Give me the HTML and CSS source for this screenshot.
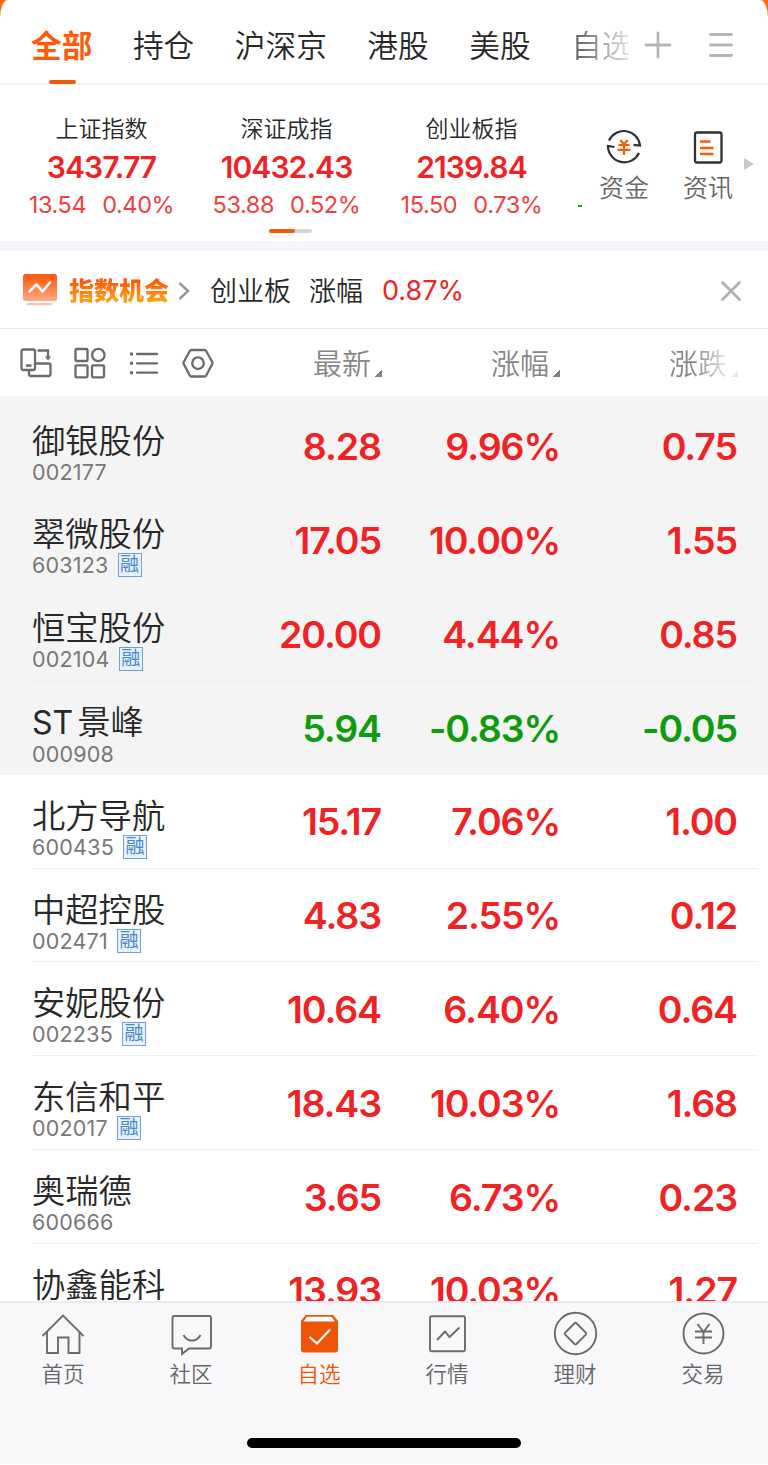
FILE: index.html
```html
<!DOCTYPE html>
<html lang="zh-CN">

<head>
    <meta charset="UTF-8">
    <title>自选股</title>
    <link rel="stylesheet" href="styles.css">
</head>

<body>
    <div class="app">
        <div class="top">
            <div class="tabs">
                <a class="tab active">全部</a>
                <a class="tab">持仓</a>
                <a class="tab">沪深京</a>
                <a class="tab">港股</a>
                <a class="tab">美股</a>
                <a class="tab fade">自选</a>
            </div>
            <svg class="plus" width="26" height="26" viewBox="0 0 26 26"><path d="M13 1v24M1 13h24"/></svg>
            <svg class="menu" width="24" height="26" viewBox="0 0 24 26"><path d="M1.500 2.500h21M1.500 13h21M1.500 23.500h21"/></svg>
        </div>

        <div class="index">
            <div class="index-list">
                <div class="index-item">
                    <h3>上证指数</h3>
                    <strong>3437.77</strong>
                    <p><span>13.54</span><span>0.40%</span></p>
                </div>
                <div class="index-item">
                    <h3>深证成指</h3>
                    <strong>10432.43</strong>
                    <p><span>53.88</span><span>0.52%</span></p>
                </div>
                <div class="index-item">
                    <h3>创业板指</h3>
                    <strong>2139.84</strong>
                    <p><span>15.50</span><span>0.73%</span></p>
                </div>
                <i class="dash"></i>
            </div>
            <div class="pager"><i></i></div>
            <div class="entry">
                <svg width="36" height="36" viewBox="0 0 36 36">
                    <g fill="none" stroke="#303030" stroke-width="2.200">
                        <path d="M3 11.500A16.300 16.300 0 0 1 34 16.500L27.500 15.800"/>
                        <path d="M33 24A16.300 16.300 0 0 1 2 17L8.500 18"/>
                    </g>
                    <path d="M14.500 11l3.500 4.500 3.500-4.500M12.500 16h11M11.500 20.800h13M18 15.500v10.500" fill="none" stroke="#ff5a0a" stroke-width="2.200"/>
                </svg>
                <span>资金</span>
            </div>
            <div class="entry">
                <svg width="36" height="36" viewBox="0 0 36 36">
                    <rect x="5" y="3.500" width="26.500" height="30" rx="2" fill="none" stroke="#303030" stroke-width="2.300"/>
                    <path d="M10 12.500h10.500M10 19h13.500M10 25h13.500" fill="none" stroke="#ff5a0a" stroke-width="2.600"/>
                </svg>
                <span>资讯</span>
            </div>
            <i class="more"></i>
        </div>

        <div class="notice">
            <svg width="34" height="34" viewBox="0 0 34 34">
                <defs>
                    <linearGradient id="board" x1="0" y1="0" x2="0" y2="1">
                        <stop offset="0.100" stop-color="#fd5a10"/>
                        <stop offset="1" stop-color="#ffab88"/>
                    </linearGradient>
                </defs>
                <rect x="0" y="0" width="34" height="27" rx="2.500" fill="url(#board)"/>
                <path d="M6.500 17.500l7-7 6 7L27 8.500" fill="none" stroke="#fff" stroke-width="2.600" stroke-linecap="round" stroke-linejoin="round"/>
                <rect x="4" y="29" width="25" height="2.200" rx="1" fill="#ffc3a8"/>
            </svg>
            <b>指数机会</b>
            <svg class="arrow" width="12" height="20" viewBox="0 0 12 20"><path d="M1.500 2l8.500 8-8.500 8"/></svg>
            <span class="board">创业板</span>
            <span class="label">涨幅</span>
            <em>0.87%</em>
            <svg class="close" width="20" height="20" viewBox="0 0 20 20"><path d="M1.500 1.500l17 17M18.500 1.500l-17 17"/></svg>
        </div>

        <div class="thead">
            <div class="tools">
                <svg width="32" height="32" viewBox="0 0 32 32">
                    <rect x="1.500" y="2.500" width="13.500" height="20.500" rx="2"/>
                    <path d="M6 18.500h5.500M17.500 3.500H28v8M15 16.500h13.500a2 2 0 0 1 2 2v8.500a2 2 0 0 1-2 2H11a2 2 0 0 1-2-2V23"/>
                    <path class="tip" d="M25 9.500h6l-3 4z"/>
                </svg>
                <svg width="32" height="32" viewBox="0 0 32 32">
                    <rect x="1.500" y="2" width="12" height="12" rx="1"/>
                    <circle cx="24.300" cy="8" r="6.200"/>
                    <rect x="1.500" y="18.300" width="12" height="12" rx="1"/>
                    <rect x="18" y="18.300" width="12" height="12" rx="1"/>
                </svg>
                <svg width="32" height="32" viewBox="0 0 32 32">
                    <path d="M9 7h20M9 16.300h20M9 25.700h20" stroke-linecap="round"/>
                    <path d="M2 7h3M2 16.300h3M2 25.700h3" stroke-width="3"/>
                </svg>
                <svg width="32" height="32" viewBox="0 0 32 32">
                    <path d="M9.500 3h13a2 2 0 0 1 1.700 1l6 11a2 2 0 0 1 0 2.200l-6 11.300a2 2 0 0 1-1.700 1h-13a2 2 0 0 1-1.700-1l-6-11.300a2 2 0 0 1 0-2.200l6-11a2 2 0 0 1 1.700-1z"/>
                    <circle cx="16" cy="16.200" r="5.800"/>
                </svg>
            </div>
            <div class="th">最新<i></i></div>
            <div class="th">涨幅<i></i></div>
            <div class="th last">涨跌<i></i></div>
        </div>

        <div class="list">
            <div class="rows top-rows">
                <div class="row">
                    <div class="stock"><h4>御银股份</h4><p>002177</p></div>
                    <div class="num">8.28</div><div class="num pct">9.96%</div><div class="num">0.75</div>
                </div>
                <div class="row">
                    <div class="stock"><h4>翠微股份</h4><p>603123<i>融</i></p></div>
                    <div class="num">17.05</div><div class="num pct">10.00%</div><div class="num">1.55</div>
                </div>
                <div class="row">
                    <div class="stock"><h4>恒宝股份</h4><p>002104<i>融</i></p></div>
                    <div class="num">20.00</div><div class="num pct">4.44%</div><div class="num">0.85</div>
                </div>
                <div class="row down">
                    <div class="stock"><h4><span>ST</span>景峰</h4><p>000908</p></div>
                    <div class="num">5.94</div><div class="num pct">-0.83%</div><div class="num">-0.05</div>
                </div>
            </div>
            <div class="rows">
                <div class="row">
                    <div class="stock"><h4>北方导航</h4><p>600435<i>融</i></p></div>
                    <div class="num">15.17</div><div class="num pct">7.06%</div><div class="num">1.00</div>
                </div>
                <div class="row">
                    <div class="stock"><h4>中超控股</h4><p>002471<i>融</i></p></div>
                    <div class="num">4.83</div><div class="num pct">2.55%</div><div class="num">0.12</div>
                </div>
                <div class="row">
                    <div class="stock"><h4>安妮股份</h4><p>002235<i>融</i></p></div>
                    <div class="num">10.64</div><div class="num pct">6.40%</div><div class="num">0.64</div>
                </div>
                <div class="row">
                    <div class="stock"><h4>东信和平</h4><p>002017<i>融</i></p></div>
                    <div class="num">18.43</div><div class="num pct">10.03%</div><div class="num">1.68</div>
                </div>
                <div class="row">
                    <div class="stock"><h4>奥瑞德</h4><p>600666</p></div>
                    <div class="num">3.65</div><div class="num pct">6.73%</div><div class="num">0.23</div>
                </div>
                <div class="row">
                    <div class="stock"><h4>协鑫能科</h4></div>
                    <div class="num">13.93</div><div class="num pct">10.03%</div><div class="num">1.27</div>
                </div>
            </div>
        </div>

        <div class="footer">
            <div class="nav">
                <a>
                    <svg width="46" height="46" viewBox="0 0 46 46">
                        <path d="M2.500 24L23 3.500 43.500 24M7 20v21h11V25.500h10.500V41h11V20"/>
                    </svg>
                    <span>首页</span>
                </a>
                <a>
                    <svg width="46" height="46" viewBox="0 0 46 46">
                        <path d="M6.500 4H41a2 2 0 0 1 2 2v28.500a2 2 0 0 1-2 2H21L14 42v-5.500H6.500a2 2 0 0 1-2-2V6a2 2 0 0 1 2-2z"/>
                        <path d="M15.500 23c4 7.500 13 7.500 17 0"/>
                    </svg>
                    <span>社区</span>
                </a>
                <a class="on">
                    <svg width="46" height="46" viewBox="0 0 46 46">
                        <path class="solid" d="M9.500 3h27.500l5 6v28.500a3 3 0 0 1-3 3H8a3 3 0 0 1-3-3V9z"/>
                        <path class="lid" d="M11 4.800H35.500l3.500 4.700H7.500z"/>
                        <path class="tick" d="M13.500 25l7.500 6.500L34 17.500"/>
                    </svg>
                    <span>自选</span>
                </a>
                <a>
                    <svg width="46" height="46" viewBox="0 0 46 46">
                        <rect x="6" y="4.300" width="35" height="35" rx="1.500"/>
                        <path d="M13 28l8-8.500 4.500 5.500 10-9.500"/>
                    </svg>
                    <span>行情</span>
                </a>
                <a>
                    <svg width="46" height="46" viewBox="0 0 46 46">
                        <circle cx="23.500" cy="21.500" r="20.700"/>
                        <path d="M22.500 11.300a1.500 1.500 0 0 1 2 0l9.300 9.300a1.500 1.500 0 0 1 0 2L24.500 32a1.500 1.500 0 0 1-2 0l-9.300-9.300a1.500 1.500 0 0 1 0-2z"/>
                    </svg>
                    <span>理财</span>
                </a>
                <a>
                    <svg width="46" height="46" viewBox="0 0 46 46">
                        <circle cx="23.500" cy="21.500" r="20"/>
                        <path d="M17.500 12l6 8 6-8M15 19.500h17M15 25.500h17M23.500 19.500V32"/>
                    </svg>
                    <span>交易</span>
                </a>
            </div>
            <div class="homebar"></div>
        </div>
    </div>
</body>

</html>
```
FILE: styles.css
```css
* {
    box-sizing: border-box;
    margin: 0;
    padding: 0;
}

body {
    width: 768px;
    background-color: #ff6a14;
    font-family: Inter, "Noto Sans CJK SC", sans-serif;
    color: #282828;
}

svg {
    display: block;
    flex: none;
    overflow: visible;
}

i,
em {
    font-style: normal;
}

.app {
    display: flex;
    flex-direction: column;
    height: 1465px;
    background-color: #fff;
    border-radius: 8px 8px 0 0 / 18px 18px 0 0;
    overflow: hidden;
}

/* 顶部标签 */
.top {
    display: flex;
    align-items: center;
    height: 85px;
    padding: 0 35px 0 31px;
    border-bottom: 2px solid #f2f2f3;
}

.tabs {
    display: flex;
    gap: 40.500px;
    width: 597px;
    height: 85px;
    overflow: hidden;
}

.tab {
    position: relative;
    flex: none;
    font-size: 30.700px;
    font-weight: 350;
    line-height: 93px;
}

.active {
    color: #ff5a0a;
    font-weight: bold;
}

.active::after {
    content: "";
    position: absolute;
    left: 18px;
    top: 81px;
    width: 27px;
    height: 4px;
    border-radius: 2px;
    background-color: #f05a0a;
}

.fade {
    color: transparent;
    background: linear-gradient(90deg, #555, #ddd 90%);
    -webkit-background-clip: text;
    background-clip: text;
}

.plus,
.menu {
    margin-top: 6px;
    fill: none;
    stroke: #b5b5b5;
    stroke-width: 2.800;
    stroke-linecap: round;
}

.plus {
    margin-left: 17px;
}

.menu {
    margin-left: auto;
}

/* 指数 */
.index {
    position: relative;
    display: flex;
    height: 156px;
}

.index-list {
    position: relative;
    display: flex;
    width: 582px;
    padding: 28px 0 0 9px;
}

.index-item {
    flex: none;
    width: 185px;
    text-align: center;
}

.index-item h3 {
    font-size: 23px;
    font-weight: 350;
    line-height: 32px;
}

.index-item strong {
    display: block;
    font-size: 30px;
    font-weight: 600;
    line-height: 44px;
    letter-spacing: -0.900px;
    color: #f02223;
}

.index-item p {
    display: flex;
    justify-content: center;
    gap: 16px;
    font-size: 23.500px;
    line-height: 32px;
    letter-spacing: -0.400px;
    color: #f04040;
}

.dash {
    position: absolute;
    right: 0;
    top: 120px;
    width: 4px;
    height: 2px;
    background-color: #1ea31e;
}

.pager {
    position: absolute;
    left: 269px;
    top: 144px;
    width: 43px;
    height: 4px;
    border-radius: 2px;
    background-color: #d3d5dc;
}

.pager i {
    display: block;
    width: 26px;
    height: 4px;
    border-radius: 2px;
    background-color: #f05a0a;
}

.entry {
    display: flex;
    flex-direction: column;
    align-items: center;
    width: 84px;
    padding-top: 44px;
    font-size: 25px;
    font-weight: 350;
    line-height: 36px;
    color: #686868;
}

.entry span {
    margin-top: 5px;
}

.more {
    margin: 73px 0 0 -6px;
    width: 0;
    height: 0;
    border: 6.500px solid transparent;
    border-left: 10px solid #c8c8c8;
    border-right: 0;
}

/* 指数机会 */
.notice {
    display: flex;
    align-items: center;
    height: 88px;
    padding: 2px 27px 0 23px;
    border-top: 10px solid #f5f6fa;
    border-bottom: 1px solid #e8e8e8;
    font-size: 27px;
    font-weight: 350;
}

.notice b {
    margin: -4px 0 0 12px;
    font-size: 25px;
    font-weight: 900;
    color: transparent;
    background: linear-gradient(#ff5a0a 30%, #ff9a14 75%);
    -webkit-background-clip: text;
    background-clip: text;
}

.arrow {
    margin-left: 9px;
    fill: none;
    stroke: #999;
    stroke-width: 2.500;
}

.board {
    margin: -2px 0 0 20px;
}

.label {
    margin: -2px 0 0 18px;
}

.notice em {
    margin-left: 19px;
    font-weight: normal;
    color: #f02223;
}

.close {
    margin-left: auto;
    fill: none;
    stroke: #b0b0b0;
    stroke-width: 2.800;
    stroke-linecap: round;
}

/* 表头 */
.thead,
.row {
    display: grid;
    grid-template-columns: 204px 146px 178px 178px;
}

.thead {
    height: 67px;
    padding-left: 32px;
    align-items: center;
}

.tools {
    display: flex;
    gap: 22px;
    margin-left: -12px;
    fill: none;
    stroke: #6b6b6b;
    stroke-width: 2.300;
}

.tip {
    fill: #6b6b6b;
    stroke: none;
}

.th {
    display: flex;
    justify-content: flex-end;
    align-items: flex-end;
    gap: 4px;
    padding-top: 5px;
    font-size: 29px;
    font-weight: 350;
    line-height: 42px;
    color: #868686;
}

.th i {
    width: 7px;
    height: 7px;
    margin-bottom: 9px;
    background: linear-gradient(135deg, transparent 50%, #808080 50%);
}

.last {
    color: transparent;
    background: linear-gradient(90deg, #868686 75%, #eee 95%);
    -webkit-background-clip: text;
    background-clip: text;
}

.last i {
    opacity: 0.200;
}

/* 股票列表 */
.list {
    height: 905px;
    overflow: hidden;
}

.top-rows {
    padding-top: 3.700px;
    background-color: #f4f4f4;
}

.row {
    position: relative;
    height: 93.800px;
    padding-left: 32px;
}

.row::after {
    content: "";
    position: absolute;
    left: 32px;
    right: 10px;
    bottom: 0;
    height: 1px;
    background-color: #efeff0;
}

.top-rows .row:last-child::after {
    display: none;
}

.stock {
    padding-top: 23px;
}

.stock h4 {
    font-size: 33.300px;
    font-weight: 350;
    line-height: 36px;
}

.stock h4 span {
    margin-right: 4px;
    font-size: 32px;
    font-weight: normal;
}

.stock p {
    display: flex;
    align-items: center;
    gap: 9px;
    height: 26px;
    font-size: 21.500px;
    letter-spacing: 0.200px;
    line-height: 26px;
    color: #777;
}

.stock i {
    width: 24px;
    height: 24px;
    border: 1px solid #6ea2dc;
    background-color: #e9f1fa;
    font-size: 19px;
    line-height: 22px;
    text-align: center;
    letter-spacing: 0;
    color: #4488d0;
}

.num {
    padding: 24.500px 1px 0 0;
    font-size: 37.500px;
    font-weight: 600;
    line-height: 46px;
    letter-spacing: -1.100px;
    text-align: right;
    color: #f02223;
}

.pct {
    padding-right: 0;
}

.down .num {
    color: #0c9c0c;
}

/* 底部导航 */
.footer {
    height: 163px;
    border-top: 2px solid #ebebef;
    background-color: #f8f8fb;
}

.nav {
    display: grid;
    grid-template-columns: repeat(6, 128px);
    height: 133px;
    margin-left: -1px;
}

.nav a {
    display: flex;
    flex-direction: column;
    align-items: center;
    padding-top: 9px;
    font-size: 21.500px;
    font-weight: 350;
    line-height: 32px;
    color: #666;
}

.nav svg {
    fill: none;
    stroke: #6b6b6b;
    stroke-width: 1.900;
}

.nav .on {
    color: #ee5504;
}

.nav .solid {
    fill: #ee5504;
    stroke: none;
}

.nav .lid {
    fill: #fff;
    stroke: none;
}

.nav .tick {
    stroke: #fff;
    stroke-width: 2.200;
}

.homebar {
    width: 274px;
    height: 10px;
    margin: 2px auto 0;
    border-radius: 5px;
    background-color: #000;
}
```
